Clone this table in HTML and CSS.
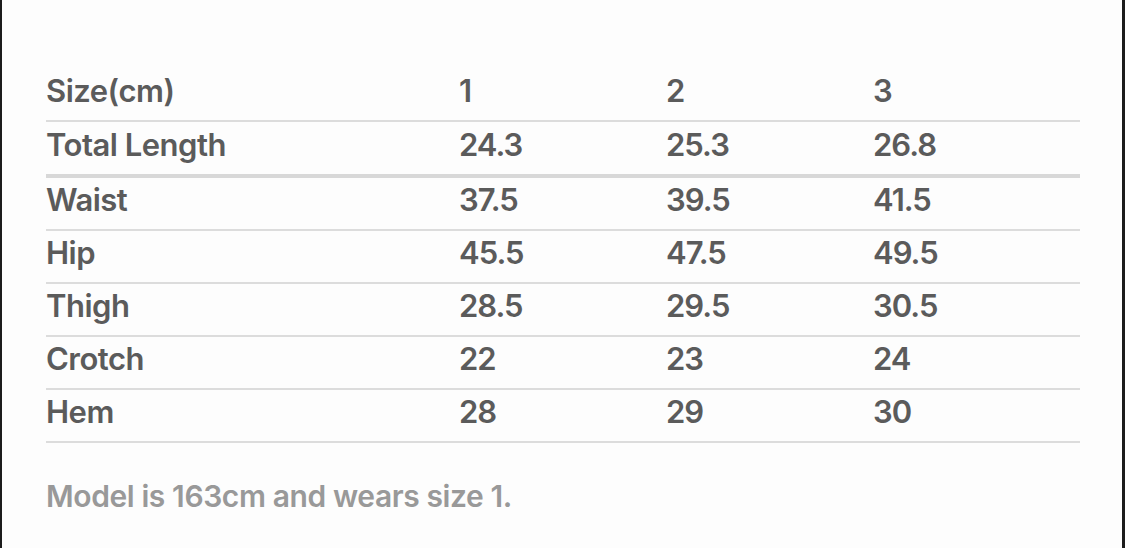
FILE: index.html
```html
<!DOCTYPE html>
<html>
<head>
<meta charset="utf-8">
<link rel="stylesheet" href="styles.css">
</head>
<body>
<div class="frame">
  <div class="chart">
    <div class="row head">
      <div class="cell label">Size(cm)</div>
      <div class="cell">1</div>
      <div class="cell">2</div>
      <div class="cell">3</div>
    </div>
    <div class="row thick">
      <div class="cell label">Total Length</div>
      <div class="cell">24.3</div>
      <div class="cell">25.3</div>
      <div class="cell">26.8</div>
    </div>
    <div class="row">
      <div class="cell label">Waist</div>
      <div class="cell">37.5</div>
      <div class="cell">39.5</div>
      <div class="cell">41.5</div>
    </div>
    <div class="row">
      <div class="cell label">Hip</div>
      <div class="cell">45.5</div>
      <div class="cell">47.5</div>
      <div class="cell">49.5</div>
    </div>
    <div class="row">
      <div class="cell label">Thigh</div>
      <div class="cell">28.5</div>
      <div class="cell">29.5</div>
      <div class="cell">30.5</div>
    </div>
    <div class="row">
      <div class="cell label">Crotch</div>
      <div class="cell">22</div>
      <div class="cell">23</div>
      <div class="cell">24</div>
    </div>
    <div class="row">
      <div class="cell label">Hem</div>
      <div class="cell">28</div>
      <div class="cell">29</div>
      <div class="cell">30</div>
    </div>
  </div>
  <p class="note">Model is 163cm and wears size 1.</p>
</div>
</body>
</html>
```
FILE: styles.css
```css
html, body {
  margin: 0;
  padding: 0;
  background: #fdfdfd;
}
.frame {
  box-sizing: border-box;
  width: 1125px;
  height: 548px;
  border-left: 2px solid #1c1c1c;
  border-right: 3px solid #1c1c1c;
  padding: 69px 0 0 44px;
  font-family: Inter, "Liberation Sans", Arial, sans-serif;
  font-weight: 600;
  color: #5b5b5b;
}
.chart {
  width: 1034px;
}
.row {
  display: grid;
  grid-template-columns: 413px 207px 207px 207px;
  height: 53px;
  box-sizing: border-box;
  border-bottom: 2px solid #dcdcdc;
  align-items: end;
}
.row.thick {
  border-bottom: 4px solid #d8d8d8;
  height: 56px;
}
.cell {
  font-size: 31px;
  letter-spacing: -1px;
  line-height: 30px;
  padding-bottom: 14px;
}
.cell.label {
  letter-spacing: -0.5px;
}
.note {
  margin: 38px 0 0 0;
  font-size: 30px;
  letter-spacing: -0.4px;
  color: #999999;
  line-height: 30px;
}
```
